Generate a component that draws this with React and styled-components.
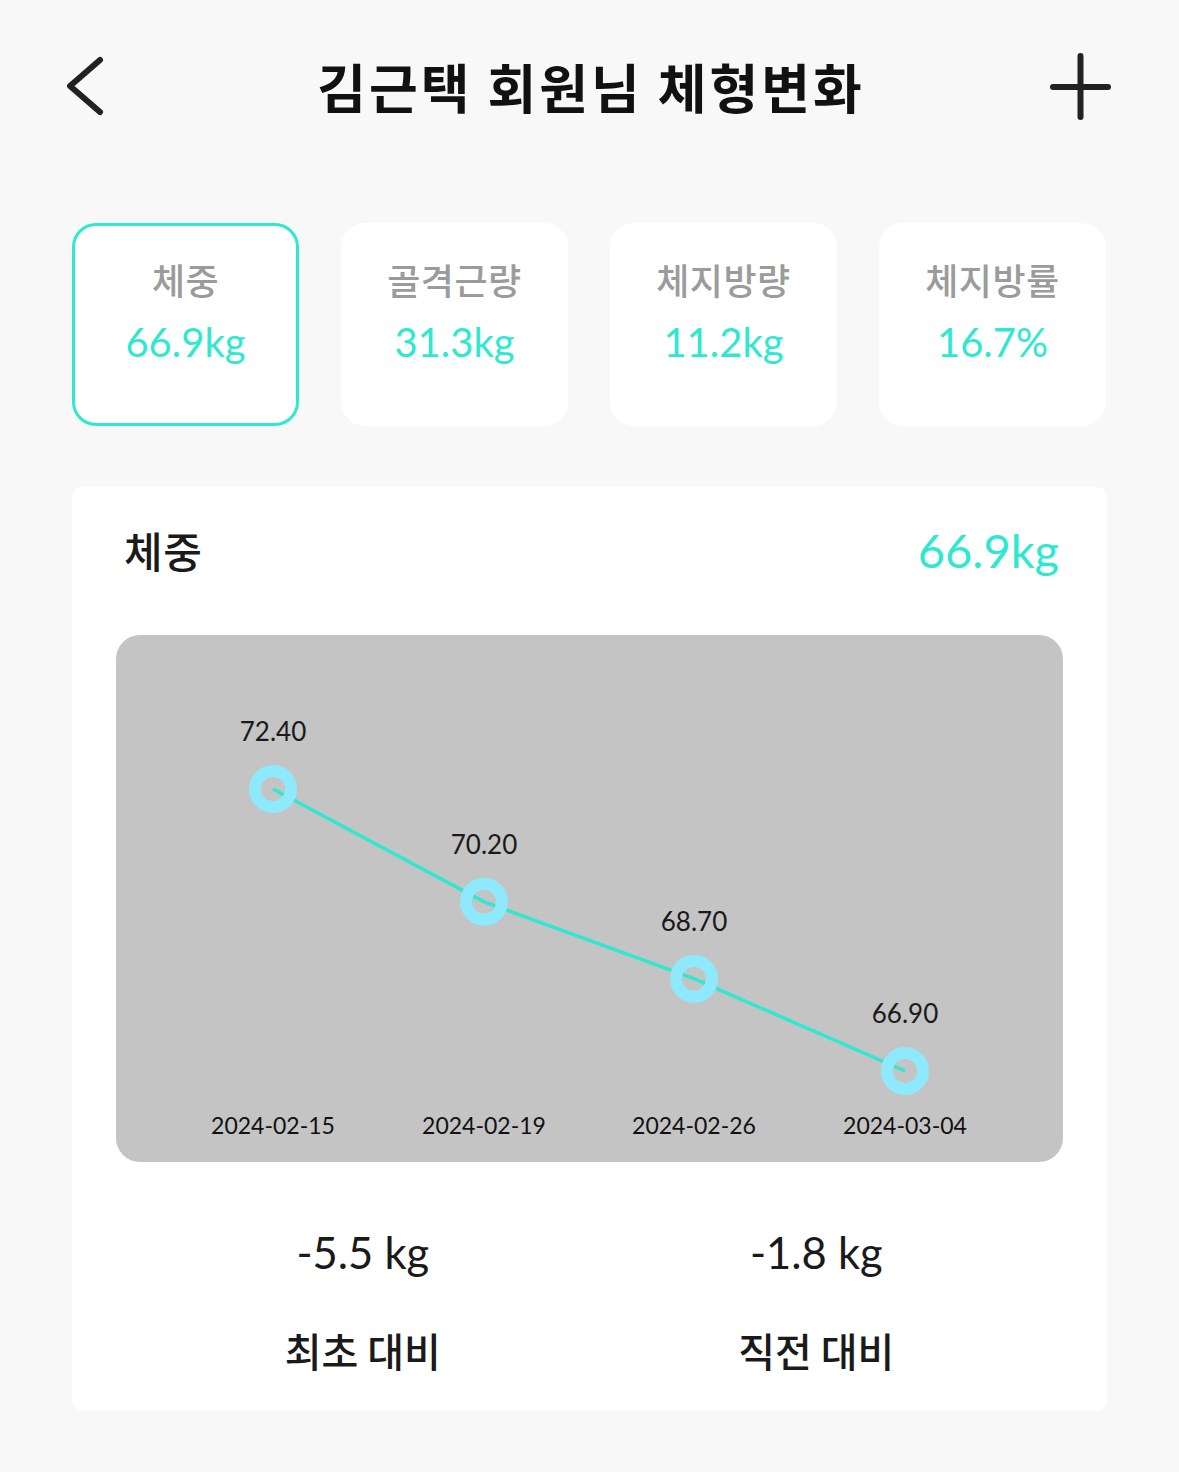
import React from "react";
import styled, { createGlobalStyle } from "styled-components";

const GlobalStyle = createGlobalStyle`
  html, body { margin: 0; padding: 0; background: #f8f8f8; }
  body { font-family: Lato, "Noto Sans CJK KR", sans-serif; color: #1a1a1a; }
  * { box-sizing: border-box; }
`;

const TEAL = "#2fe8cf";
const RING = "#8fe9fd";

const Page = styled.div`
  width: 1179px;
  min-height: 1472px;
  background: #f8f8f8;
  padding: 0 72px 61px;
`;

const Header = styled.header`
  height: 172px;
  margin: 0 -12px;
  display: grid;
  grid-template-columns: 70px 1fr 70px;
  align-items: center;
`;

const IconButton = styled.button`
  width: 70px;
  height: 70px;
  padding: 0;
  border: 0;
  background: transparent;
  display: flex;
  align-items: center;
  justify-content: center;
  svg { display: block; overflow: visible; }
`;

const Title = styled.h1`
  margin: 0;
  text-align: center;
  font-family: "Noto Sans CJK KR", sans-serif;
  font-weight: 700;
  font-size: 53px;
  letter-spacing: 3px;
  text-indent: 3px;
  line-height: 1;
  color: #111;
`;

const Cards = styled.div`
  margin-top: 51px;
  display: grid;
  grid-template-columns: repeat(4, 227px);
  gap: 42px;
`;

const Card = styled.div`
  height: 203px;
  border-radius: 24px;
  background: #fff;
  border: 3px solid ${(p) => (p.$active ? TEAL : "#fff")};
  display: flex;
  flex-direction: column;
  align-items: center;
  padding-top: 32px;
  gap: 19px;
`;

const CardLabel = styled.div`
  font-family: "Noto Sans CJK KR", sans-serif;
  font-weight: 500;
  font-size: 36px;
  letter-spacing: 0.5px;
  line-height: 42px;
  color: #9b9b9b;
`;

const CardValue = styled.div`
  font-family: Lato, sans-serif;
  font-size: 40px;
  line-height: 46px;
  color: ${TEAL};
`;

const Panel = styled.section`
  margin-top: 61px;
  background: #fff;
  border-radius: 10px;
  padding: 39px 44px 39px;
`;

const PanelHead = styled.div`
  height: 48px;
  padding: 0 4px 0 8px;
  display: flex;
  align-items: center;
  justify-content: space-between;
`;

const PanelTitle = styled.h2`
  margin: 0;
  font-family: "Noto Sans CJK KR", sans-serif;
  font-weight: 500;
  font-size: 42px;
  letter-spacing: 0.5px;
  line-height: 48px;
  color: #1a1a1a;
`;

const PanelValue = styled.div`
  font-family: Lato, sans-serif;
  font-size: 47px;
  line-height: 48px;
  color: ${TEAL};
`;

const ChartBox = styled.div`
  margin-top: 61px;
  height: 527px;
  border-radius: 24px;
  background: #c4c4c4;
  overflow: hidden;
  svg { display: block; }
`;

const Stats = styled.div`
  margin-top: 66px;
  padding: 0 20px;
  display: grid;
  grid-template-columns: 1fr 1fr;
`;

const Stat = styled.div`
  display: flex;
  flex-direction: column;
  align-items: center;
  gap: 52px;
`;

const StatValue = styled.div`
  font-family: Lato, sans-serif;
  font-size: 43.5px;
  line-height: 48px;
  color: #1a1a1a;
`;

const StatLabel = styled.div`
  font-family: "Noto Sans CJK KR", sans-serif;
  font-weight: 500;
  font-size: 40px;
  line-height: 44px;
  color: #1a1a1a;
`;

const metrics = [
  { label: "체중", value: "66.9kg", active: true },
  { label: "골격근량", value: "31.3kg" },
  { label: "체지방량", value: "11.2kg" },
  { label: "체지방률", value: "16.7%" },
];

const data = [
  { date: "2024-02-15", v: 72.4 },
  { date: "2024-02-19", v: 70.2 },
  { date: "2024-02-26", v: 68.7 },
  { date: "2024-03-04", v: 66.9 },
];

function Chart() {
  const xs = [157, 368, 578, 789];
  const yOf = (v) => 154 + (72.4 - v) * 51.27;
  const pts = data.map((d, i) => [xs[i], yOf(d.v)]);
  return (
    <svg width="946" height="527" viewBox="0 0 946 527">
      <polyline
        points={pts.map((p) => p.join(",")).join(" ")}
        fill="none"
        stroke={TEAL}
        strokeWidth="3.5"
      />
      {pts.map(([x, y], i) => (
        <g key={i}>
          <circle cx={x} cy={y} r="18" fill="none" stroke={RING} strokeWidth="12" />
          <text
            x={x}
            y={y - 48}
            textAnchor="middle"
            fontFamily="Lato, sans-serif"
            fontSize="26"
            fill="#1a1a1a"
          >
            {data[i].v.toFixed(2)}
          </text>
          <text
            x={x}
            y={499}
            textAnchor="middle"
            fontFamily="Lato, sans-serif"
            fontSize="23"
            fill="#111"
          >
            {data[i].date}
          </text>
        </g>
      ))}
    </svg>
  );
}

export default function App() {
  return (
    <>
      <GlobalStyle />
      <Page>
        <Header>
          <IconButton aria-label="뒤로">
            <svg width="70" height="70" viewBox="0 0 70 70">
              <polyline
                points="40,9 10,35 40,61"
                fill="none"
                stroke="#222"
                strokeWidth="6"
                strokeLinecap="round"
                strokeLinejoin="round"
              />
            </svg>
          </IconButton>
          <Title>김근택 회원님 체형변화</Title>
          <IconButton aria-label="추가">
            <svg width="70" height="70" viewBox="0 0 70 70">
              <path
                d="M31.5 5 V66 M4 36 H59"
                fill="none"
                stroke="#222"
                strokeWidth="6"
                strokeLinecap="round"
              />
            </svg>
          </IconButton>
        </Header>

        <Cards>
          {metrics.map((m) => (
            <Card key={m.label} $active={m.active}>
              <CardLabel>{m.label}</CardLabel>
              <CardValue>{m.value}</CardValue>
            </Card>
          ))}
        </Cards>

        <Panel>
          <PanelHead>
            <PanelTitle>체중</PanelTitle>
            <PanelValue>66.9kg</PanelValue>
          </PanelHead>
          <ChartBox>
            <Chart />
          </ChartBox>
          <Stats>
            <Stat>
              <StatValue>-5.5 kg</StatValue>
              <StatLabel>최초 대비</StatLabel>
            </Stat>
            <Stat>
              <StatValue>-1.8 kg</StatValue>
              <StatLabel>직전 대비</StatLabel>
            </Stat>
          </Stats>
        </Panel>
      </Page>
    </>
  );
}
